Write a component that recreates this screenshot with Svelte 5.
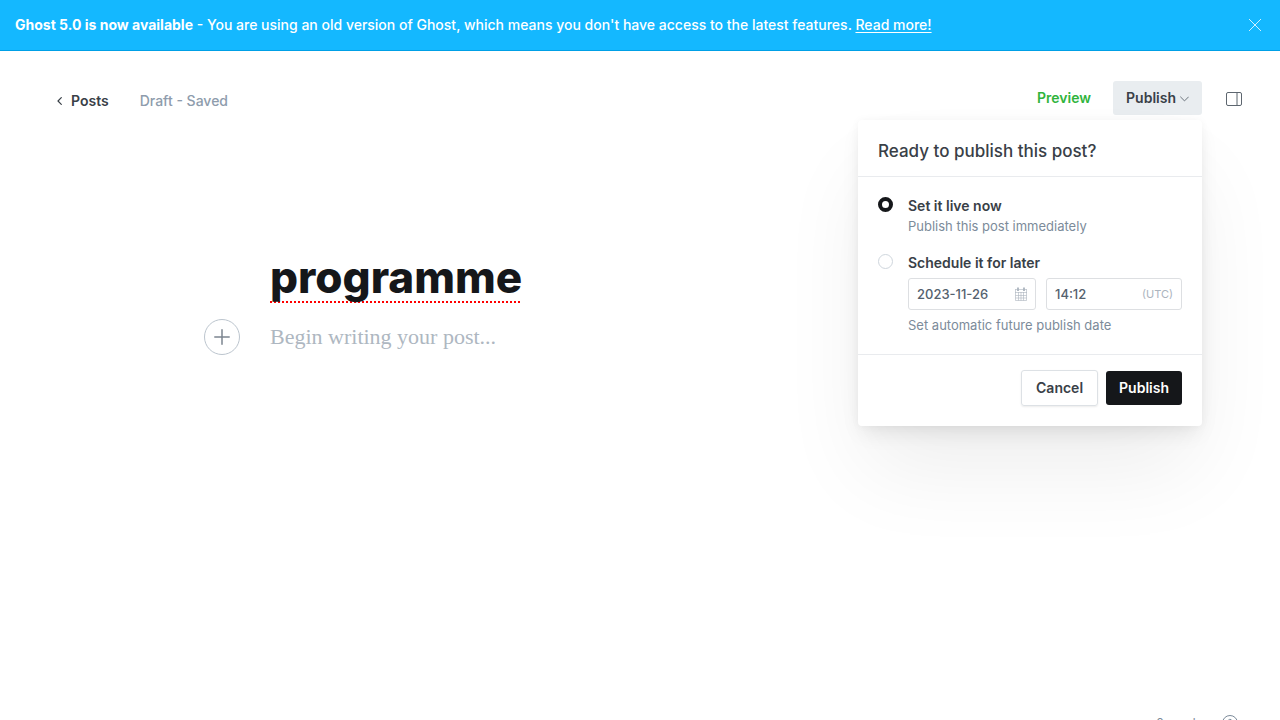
<script>
  let title = $state('programme');
  let body = $state('');
  let release = $state('now');
  let date = $state('2023-11-26');
  let time = $state('14:12');
  let menuOpen = $state(true);
  let bannerOpen = $state(true);
  let words = $derived(body.trim() ? body.trim().split(/\s+/).length : 0);
</script>

<div class="app">
  {#if bannerOpen}
    <aside class="banner">
      <p><strong>Ghost 5.0 is now available</strong> - You are using an old version of Ghost, which means you don't have access to the latest features. <a href="#upgrade">Read more!</a></p>
      <button class="icon-button" aria-label="Dismiss" onclick={() => (bannerOpen = false)}>
        <svg width="12" height="12" viewBox="0 0 12 12" fill="none" stroke="currentColor" stroke-width="0.8"><path d="M0 0l12 12M12 0L0 12" /></svg>
      </button>
    </aside>
  {/if}

  <div class="editor">
    <header>
      <nav>
        <a class="back" href="#posts">
          <svg width="5" height="8" viewBox="0 0 5 8" fill="none" stroke="currentColor" stroke-width="1.2" stroke-linecap="round" stroke-linejoin="round"><path d="M4.3.7L1 4l3.300 3.300" /></svg>
          Posts
        </a>
        <span class="status">Draft - Saved</span>
      </nav>
      <div class="actions">
        <button class="preview">Preview</button>
        <div class="publish">
          <button class="trigger" aria-expanded={menuOpen} onclick={() => (menuOpen = !menuOpen)}>
            Publish
            <svg width="9" height="8" viewBox="0 0 9 8" fill="none" stroke="currentColor" stroke-linecap="round" stroke-linejoin="round"><path d="M.6 3l3.900 3.900L8.400 3" /></svg>
          </button>
          {#if menuOpen}
            <form class="menu" onsubmit={(e) => e.preventDefault()}>
              <h2>Ready to publish this post?</h2>
              <div class="options">
                <div class="option">
                  <input type="radio" id="now" name="release" value="now" bind:group={release} />
                  <div class="detail">
                    <label for="now">Set it live now</label>
                    <p>Publish this post immediately</p>
                  </div>
                </div>
                <div class="option">
                  <input type="radio" id="later" name="release" value="later" bind:group={release} />
                  <div class="detail">
                    <label for="later">Schedule it for later</label>
                    <div class="fields">
                      <div class="field">
                        <input type="text" aria-label="Publish date" bind:value={date} />
                        <svg width="12" height="14" viewBox="0 0 12 14" fill="none" stroke="currentColor"><path d="M.5 2v11.500h11V2M0 5.500h12M.5 8.500h11M.5 11h11M3.500 5v8.500M6 5v8.500M8.500 5v8.500" stroke-width=".6" /><path d="M.5 2.500h11" stroke-width=".6" /><path d="M3 .5v3.500M9 .5v3.500" stroke-width="1.800" /></svg>
                      </div>
                      <div class="field">
                        <input type="text" aria-label="Publish time" bind:value={time} />
                        <span>(UTC)</span>
                      </div>
                    </div>
                    <p>Set automatic future publish date</p>
                  </div>
                </div>
              </div>
              <footer>
                <button type="button" class="cancel" onclick={() => (menuOpen = false)}>Cancel</button>
                <button class="confirm">Publish</button>
              </footer>
            </form>
          {/if}
        </div>
        <button class="icon-button settings" aria-label="Settings">
          <svg width="16" height="14" viewBox="0 0 16 14" fill="none" stroke="currentColor"><rect x=".5" y=".5" width="15" height="13" rx="1.500" /><path d="M11 .5v13" /></svg>
        </button>
      </div>
    </header>

    <main>
      <input class="title" aria-label="Post title" bind:value={title} />
      <div class="content">
        <button class="add" aria-label="Add a card">
          <svg width="16" height="16" viewBox="0 0 16 16" fill="none" stroke="currentColor" stroke-width="1.500" stroke-linecap="round"><path d="M8 .8v14.400M.8 8h14.400" /></svg>
        </button>
        <textarea rows="1" aria-label="Post content" placeholder="Begin writing your post..." bind:value={body}></textarea>
      </div>
    </main>

    <div class="count">
      <span>{words} words</span>
      <a href="#help" aria-label="Help">
        <svg width="16" height="16" viewBox="0 0 16 16" fill="none" stroke="currentColor"><circle cx="8" cy="8" r="7.500" /><path d="M6 6.300a2 2 0 1 1 2.900 1.800c-.6.300-.9.700-.9 1.400M8 11.300v.9" /></svg>
      </a>
    </div>
  </div>
</div>

<style>
  :global(body) { margin: 0; background: #fff; }
  .app {
    height: 100vh;
    overflow: hidden;
    font-family: Inter, "Liberation Sans", sans-serif;
    font-size: 14px;
    line-height: 20px;
    color: #394047;
  }
  .app :global(*) { box-sizing: border-box; }
  p, h2 { margin: 0; }
  svg { display: block; flex: none; }
  button, input, textarea { font: inherit; color: inherit; }
  button { padding: 0; border: 0; background: none; cursor: pointer; }
  a { color: inherit; text-decoration: none; }

  .banner {
    display: flex;
    align-items: center;
    justify-content: space-between;
    min-height: 51px;
    padding: 0 19px 1px 15px;
    background: #14b8ff;
    border-bottom: 1px solid #00a0e6;
    color: #fff;
    font-weight: 500;
  }
  .banner strong { font-weight: 700; }
  .banner a {
    text-decoration: underline 1px;
    text-underline-offset: 2px;
    text-decoration-skip-ink: none;
  }
  .icon-button { display: block; }

  .editor {
    display: flex;
    flex-direction: column;
    min-height: calc(100vh - 38px);
  }
  header {
    display: flex;
    justify-content: space-between;
    align-items: center;
    padding: 30px 38px 0 57px;
    font-weight: 600;
  }
  nav { display: flex; gap: 31px; padding-top: 6px; font-weight: 500; }
  .back { display: flex; align-items: center; gap: 9px; font-weight: 600; }
  .status { color: #8e9cac; }
  .actions { display: flex; align-items: center; }
  .preview { margin-right: 22px; color: #30b43c; }
  .publish { position: relative; margin-right: 24px; }
  .trigger {
    display: flex;
    align-items: center;
    gap: 4px;
    height: 34px;
    padding: 0 13px;
    border-radius: 3px;
    background: #e9edf0;
  }
  .trigger svg { color: #6b737c; }
  .settings { padding-top: 2px; color: #5d666f; }

  .menu {
    position: absolute;
    z-index: 2;
    top: 39px;
    right: 0;
    width: 344px;
    border-radius: 4px;
    background: #fff;
    box-shadow: 0 0 8px rgba(0, 0, 0, .04), 0 10px 20px -4px rgba(0, 0, 0, .09), 0 50px 84px -8px rgba(0, 0, 0, .07);
    font-weight: 400;
  }
  h2 {
    padding: 20px 20px 13px;
    border-bottom: 1px solid #e9ebee;
    font-size: 17px;
    line-height: 23px;
    font-weight: 500;
  }
  .options {
    display: grid;
    gap: 16px;
    padding: 19px 20px 18px;
    border-bottom: 1px solid #e9ebee;
  }
  .option { display: flex; gap: 15px; }
  .option input[type="radio"] {
    appearance: none;
    flex: none;
    width: 15px;
    height: 15px;
    margin: 1px 0 0;
    border: 1px solid #cfd6dd;
    border-radius: 50%;
    background: #fff;
  }
  .option input[type="radio"]:checked { border: 4px solid #15171a; }
  .detail { flex: 1; min-width: 0; }
  .detail label { display: block; line-height: 19px; font-weight: 600; }
  .detail p { font-size: 13px; line-height: 22px; color: #7c8b9a; }
  .fields {
    display: grid;
    grid-template-columns: 128fr 136fr;
    gap: 10px;
    padding: 6px 0 4px;
  }
  .field {
    display: flex;
    align-items: center;
    min-width: 0;
    height: 32px;
    padding: 0 8px;
    border: 1px solid #dddfe2;
    border-radius: 3px;
    color: #abb4be;
    font-size: 11px;
  }
  .field input {
    flex: 1;
    width: 0;
    padding: 0;
    border: 0;
    outline: 0;
    background: none;
    font-size: 13px;
    font-weight: 500;
    color: #54616e;
  }
  .menu footer {
    display: flex;
    align-items: center;
    justify-content: flex-end;
    gap: 8px;
    padding: 15px 20px 20px;
    font-weight: 600;
  }
  .cancel {
    height: 36px;
    padding: 0 14px;
    border: 1px solid #dde1e5;
    border-radius: 3px;
    box-shadow: 0 1px 2px rgba(0, 0, 0, .08);
  }
  .confirm {
    height: 34px;
    padding: 0 13px;
    border-radius: 3px;
    background: #15171a;
    color: #fff;
  }

  main {
    flex: 1;
    width: 100%;
    max-width: 740px;
    margin: 0 auto;
    padding-top: 132px;
  }
  .title {
    display: block;
    width: 100%;
    height: 60px;
    padding: 0;
    border: 0;
    outline: 0;
    background: none;
    font-size: 44px;
    line-height: 60px;
    font-weight: 800;
    color: #15171a;
    text-decoration: underline dotted #f00 2px;
    text-decoration-skip-ink: none;
    text-underline-offset: 8px;
  }
  .content {
    display: flex;
    align-items: center;
    gap: 30px;
    margin: 12px 0 0 -66px;
  }
  .add {
    display: grid;
    place-items: center;
    flex: none;
    width: 36px;
    height: 36px;
    border: 1px solid #bcc5ce;
    border-radius: 50%;
    color: #7c8590;
  }
  textarea {
    flex: 1;
    height: 30px;
    padding: 0;
    border: 0;
    outline: 0;
    resize: none;
    overflow: hidden;
    background: none;
    font-family: Georgia, "Liberation Serif", serif;
    font-size: 22px;
    line-height: 30px;
  }
  textarea::placeholder { color: #aeb7c1; opacity: 1; }

  .count {
    display: flex;
    align-items: center;
    justify-content: flex-end;
    gap: 20px;
    padding: 0 42px 0 0;
    font-size: 12px;
    color: #7c8b9a;
  }
</style>
